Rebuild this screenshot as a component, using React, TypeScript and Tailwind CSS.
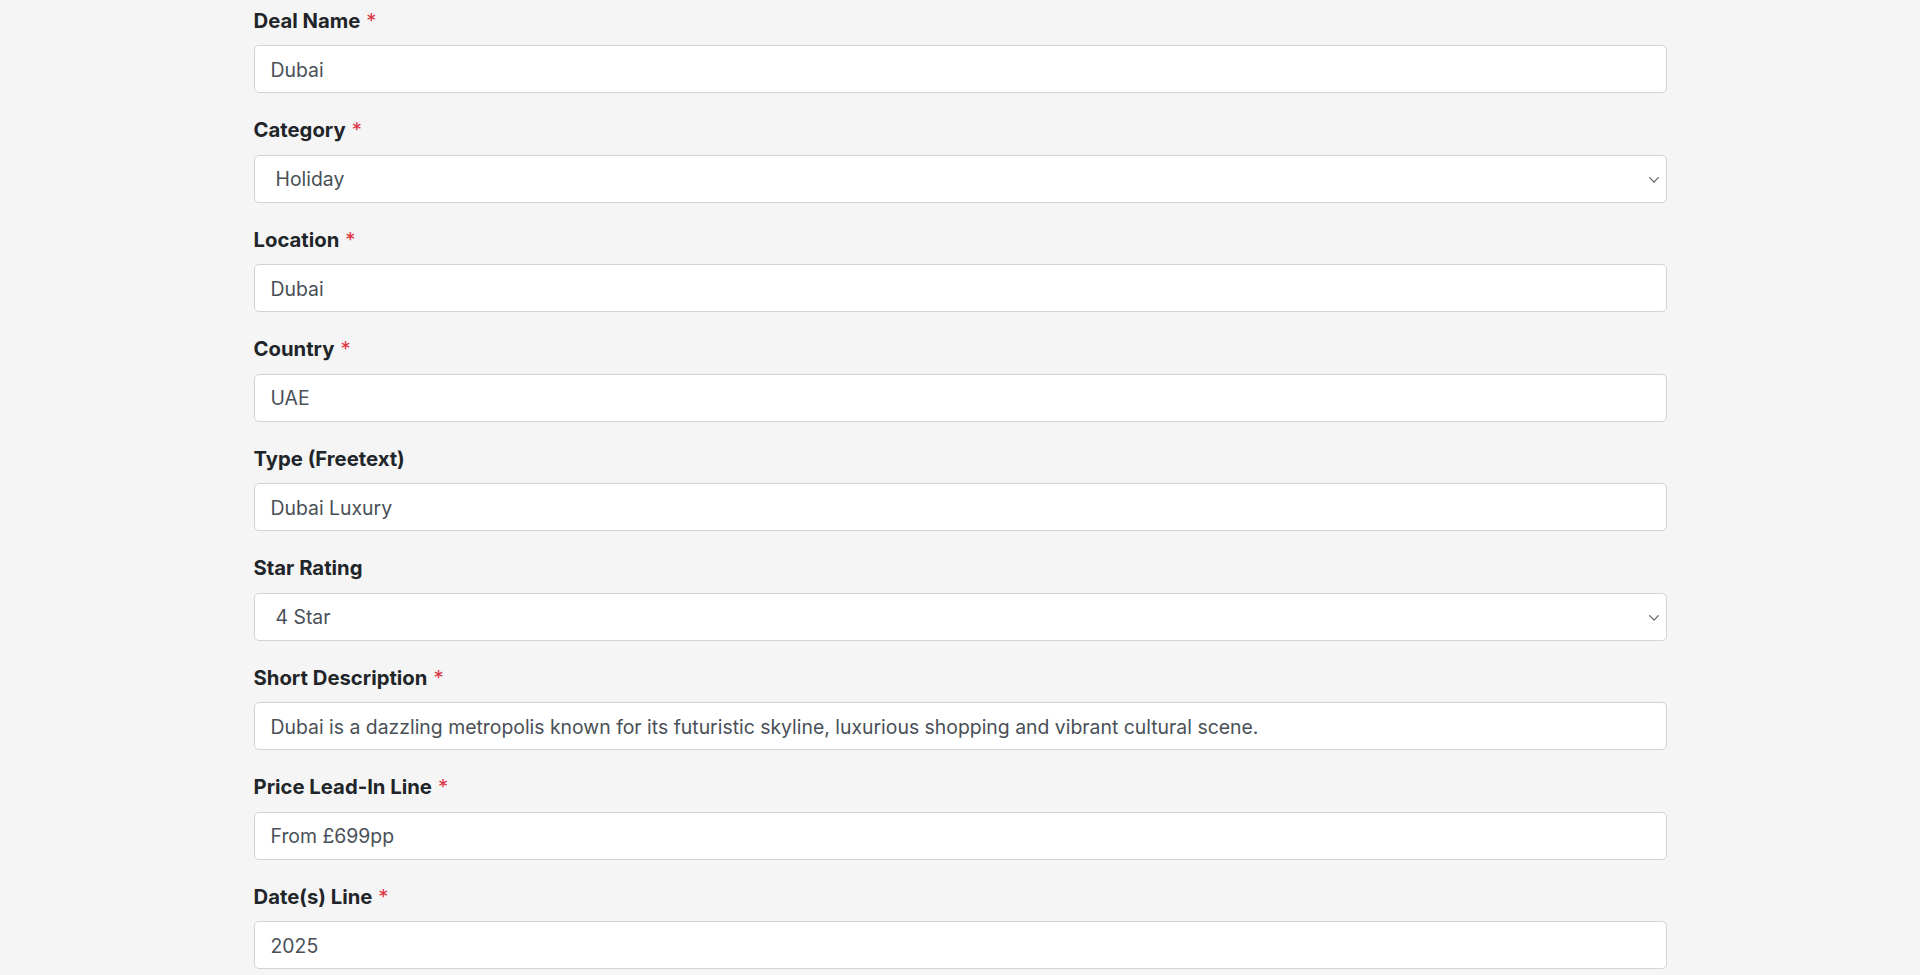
import React from "react";

type Field = { label: string; value: string; required?: boolean; select?: boolean };

const fields: Field[] = [
  { label: "Deal Name", value: "Dubai", required: true },
  { label: "Category", value: "Holiday", required: true, select: true },
  { label: "Location", value: "Dubai", required: true },
  { label: "Country", value: "UAE", required: true },
  { label: "Type (Freetext)", value: "Dubai Luxury" },
  { label: "Star Rating", value: "4 Star", select: true },
  {
    label: "Short Description",
    value:
      "Dubai is a dazzling metropolis known for its futuristic skyline, luxurious shopping and vibrant cultural scene.",
    required: true,
  },
  { label: "Price Lead-In Line", value: "From £699pp", required: true },
  { label: "Date(s) Line", value: "2025", required: true },
];

function Chevron() {
  return (
    <svg width="10" height="6" viewBox="0 0 10 6" fill="none" className="shrink-0">
      <path d="M0.7 0.7 L5 5.1 L9.3 0.7" stroke="#5a5f64" strokeWidth="1.2" strokeLinecap="round" strokeLinejoin="round" />
    </svg>
  );
}

export default function App() {
  return (
    <div
      className="min-h-[975px] w-full bg-[#f5f5f5] pt-[5.8px]"
      style={{ fontFamily: "Inter, 'Liberation Sans', Arial, sans-serif" }}
    >
      <div className="mx-auto w-[1413px]">
        {fields.map((f) => (
          <div key={f.label} className="mb-[22px]">
            <div className="mb-[10.5px] h-[29px] text-[20.3px] font-bold leading-[29px] text-[#212529]">
              {f.label}
              {f.required && <span className="ml-[6px] font-normal text-[#dc3545]">*</span>}
            </div>
            <div className="flex h-[48px] items-center justify-between rounded-[5px] border border-[#ced4da] bg-white pr-[7px] pt-[2px] text-[19.4px] text-[#495057]">
              <span className={f.select ? "pl-[21px]" : "pl-[16px]"}>{f.value}</span>
              {f.select && <Chevron />}
            </div>
          </div>
        ))}
      </div>
    </div>
  );
}
